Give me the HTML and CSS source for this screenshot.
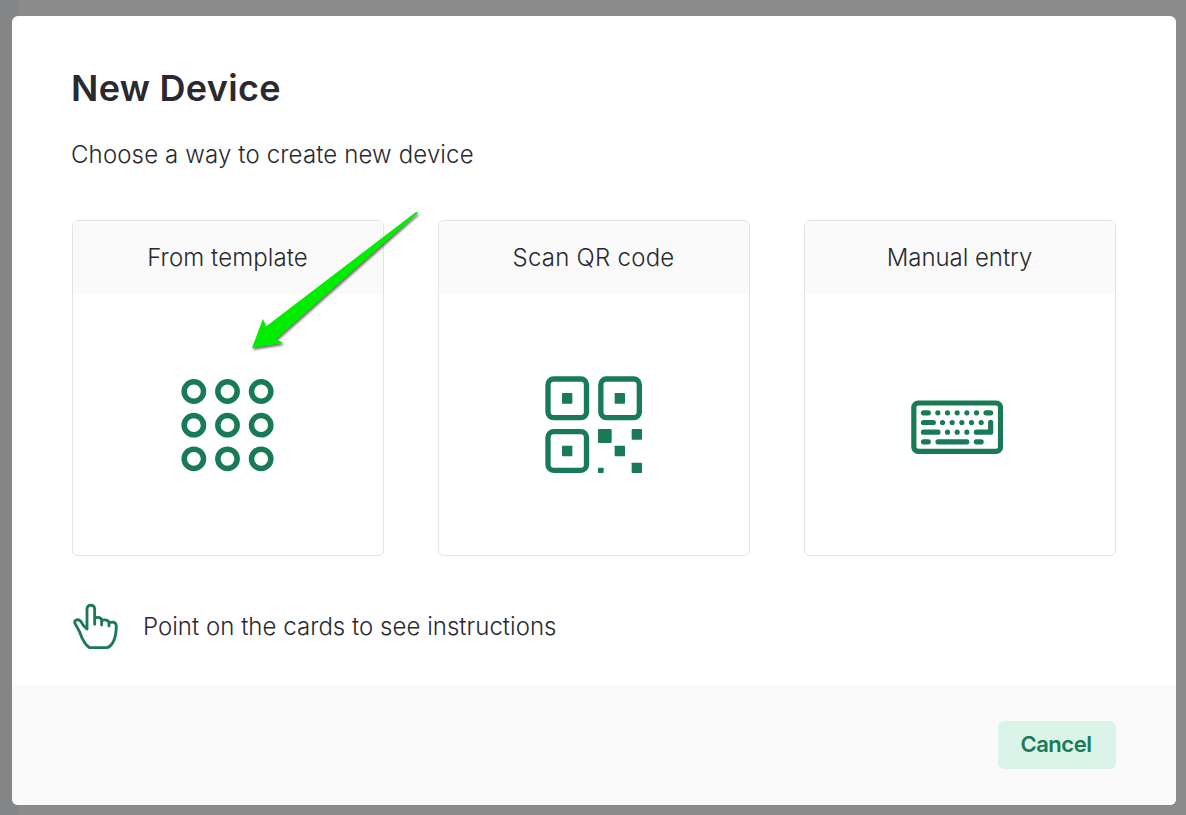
FILE: index.html
```html
<!DOCTYPE html>
<html lang="en">
<head>
<meta charset="utf-8">
<title>New Device</title>
<link rel="stylesheet" href="styles.css">
</head>
<body>
<main class="modal">
  <section class="content">
    <h1 class="title">New Device</h1>
    <p class="subtitle">Choose a way to create new device</p>
    <div class="cards">
      <article class="card">
        <h2 class="card-title">From template</h2>
        <div class="card-body">
          <svg class="icon-grid" viewBox="33 536 279 279" fill="none" stroke="currentColor" stroke-width="16.500">
            <circle cx="71.5" cy="573.5" r="29"/><circle cx="172.5" cy="573.5" r="29"/><circle cx="273.5" cy="573.5" r="29"/>
            <circle cx="71.5" cy="674.5" r="29"/><circle cx="172.5" cy="674.5" r="29"/><circle cx="273.5" cy="674.5" r="29"/>
            <circle cx="71.5" cy="775.5" r="29"/><circle cx="172.5" cy="775.5" r="29"/><circle cx="273.5" cy="775.5" r="29"/>
          </svg>
        </div>
      </article>
      <article class="card">
        <h2 class="card-title card-title-scan">Scan QR code</h2>
        <div class="card-body">
          <svg class="icon-qr" viewBox="29 33 294 294" fill="currentColor">
            <g fill="none" stroke="currentColor" stroke-width="16">
              <rect x="38" y="42" width="115.500" height="116" rx="17"/><rect x="196.500" y="42" width="115.500" height="116" rx="17"/><rect x="38" y="200" width="115.500" height="116" rx="17"/>
            </g>
            <rect x="80" y="84" width="31" height="32" rx="2"/><rect x="238" y="84" width="31" height="32" rx="2"/><rect x="80" y="242" width="31" height="32" rx="2"/>
            <rect x="188" y="192" width="41" height="42" rx="3"/><rect x="289" y="192" width="31" height="32" rx="3"/><rect x="238" y="242" width="31" height="32" rx="2"/>
            <rect x="188" y="308" width="17" height="16" rx="2"/><rect x="289" y="293" width="31" height="31" rx="2"/>
          </svg>
        </div>
      </article>
      <article class="card">
        <h2 class="card-title card-title-manual">Manual entry</h2>
        <div class="card-body">
          <svg class="icon-keyboard" viewBox="33 30 276 162" fill="none" stroke="currentColor" stroke-width="15.500" stroke-linecap="round" stroke-linejoin="round">
            <rect x="41.500" y="39" width="260" height="145" rx="13"/>
            <path d="M70.500 68.500H85M113.500 68.500h.1M142.500 68.500h.1M171.500 68.500h.1M200.500 68.500h.1M229.500 68.500h.1M258 68.500h14M70.500 97.500H100M127.500 97.500h.1M156.500 97.500h.1M185.500 97.500h.1M214.500 97.500h.1M243.500 97.500h.1M70.500 126.500H114M142.500 126.500h.1M171.500 126.500h.1M200.500 126.500h.1M229 126.500H272V97M70.500 155.500H85M114 155.500H200.500M229 155.500H243.500"/>
          </svg>
        </div>
      </article>
    </div>
    <div class="hint">
      <svg class="icon-hand" viewBox="39 39 138 141" fill="none" stroke="currentColor" stroke-width="8.500" stroke-linecap="round" stroke-linejoin="round">
        <path d="M81 117V57C81 42 104 42 104 57V103M104 84C114 80 125 82 125 92V105M125 92C134 87 147 90 147 100V108M147 99C157 94 169 96 169 109C168 142 161 165 142 173H89C73 166 64 141 58 124L45 100C41 88 56 86 63 95C67 103 73 112 81 117"/>
      </svg>
      <p class="hint-text">Point on the cards to see instructions</p>
    </div>
  </section>
  <footer class="footer"><button class="cancel" type="button">Cancel</button></footer>
</main>
<svg class="arrow" viewBox="240 30 516 428"><path d="M246 444L279 356L287 380L738 36Q743 35 743 40L318 418L340 429Z"/></svg>
</body>
</html>
```
FILE: styles.css
```css
* { box-sizing: border-box; margin: 0; }
body {
  height: 815px;
  padding: 16px 10px 10px 12px;
  overflow: hidden;
  background: linear-gradient(90deg, #848587 18px, #8b8b8b 18px);
  color: #29292f;
  font-family: Inter, "Liberation Sans", sans-serif;
}
.modal {
  display: flex;
  flex-direction: column;
  height: 789px;
  overflow: hidden;
  border-radius: 6px;
  background: #fff;
}
.content { flex: 1; padding: 50px 60px 0 59px; }
.title { font-size: 36px; font-weight: 600; line-height: 44px; letter-spacing: 0.3px; }
.subtitle { margin-top: 29px; letter-spacing: 0.14px; }
.subtitle, .card-title, .hint-text {
  font-size: 24px;
  font-weight: 300;
  line-height: 32px;
  white-space: nowrap;
}
.cards { display: grid; grid-template-columns: repeat(3, 312px); gap: 54px; margin: 49px 0 0 1px; }
.card {
  display: flex;
  flex-direction: column;
  height: 336px;
  overflow: hidden;
  border: 1px solid #e4e4e5;
  border-radius: 6px;
}
.card-title { height: 73px; padding: 21px 1px 0 0; background: #fafafa; text-align: center; letter-spacing: 0.1px; }
.card-title-scan { letter-spacing: 0.25px; }
.card-title-manual { letter-spacing: -0.04px; }
.card-body { flex: 1; display: flex; justify-content: center; align-items: flex-start; color: #197a56; }
.icon-grid { width: 93px; height: 93px; margin: 85px 2px 0 0; }
.icon-qr { width: 98px; height: 98px; margin: 82px 1px 0 0; }
.icon-keyboard { width: 92px; height: 54px; margin: 106px 6px 0 0; }
.hint { display: flex; align-items: flex-start; gap: 24px; margin-top: 47px; padding-left: 2px; }
.icon-hand { width: 46px; height: 47px; color: #197a56; }
.hint-text { padding-top: 8px; letter-spacing: 0.03px; }
.footer {
  display: flex;
  justify-content: flex-end;
  align-items: center;
  height: 120px;
  padding-right: 60px;
  background: #fafafa;
}
.cancel {
  width: 118px;
  height: 48px;
  padding: 0 2px 2px 0;
  border: 0;
  border-radius: 6px;
  background: #daf4ea;
  color: #197a56;
  font: 600 22px/46px Inter, "Liberation Sans", sans-serif;
  letter-spacing: -0.45px;
}
/* Callout lying over the first card */
.arrow {
  position: absolute;
  left: 250px;
  top: 210px;
  width: 172px;
  height: 142.667px;
  overflow: visible;
  fill: #00ed00;
  filter: drop-shadow(1px 2px 1px rgba(0, 0, 0, 0.55));
}
```
